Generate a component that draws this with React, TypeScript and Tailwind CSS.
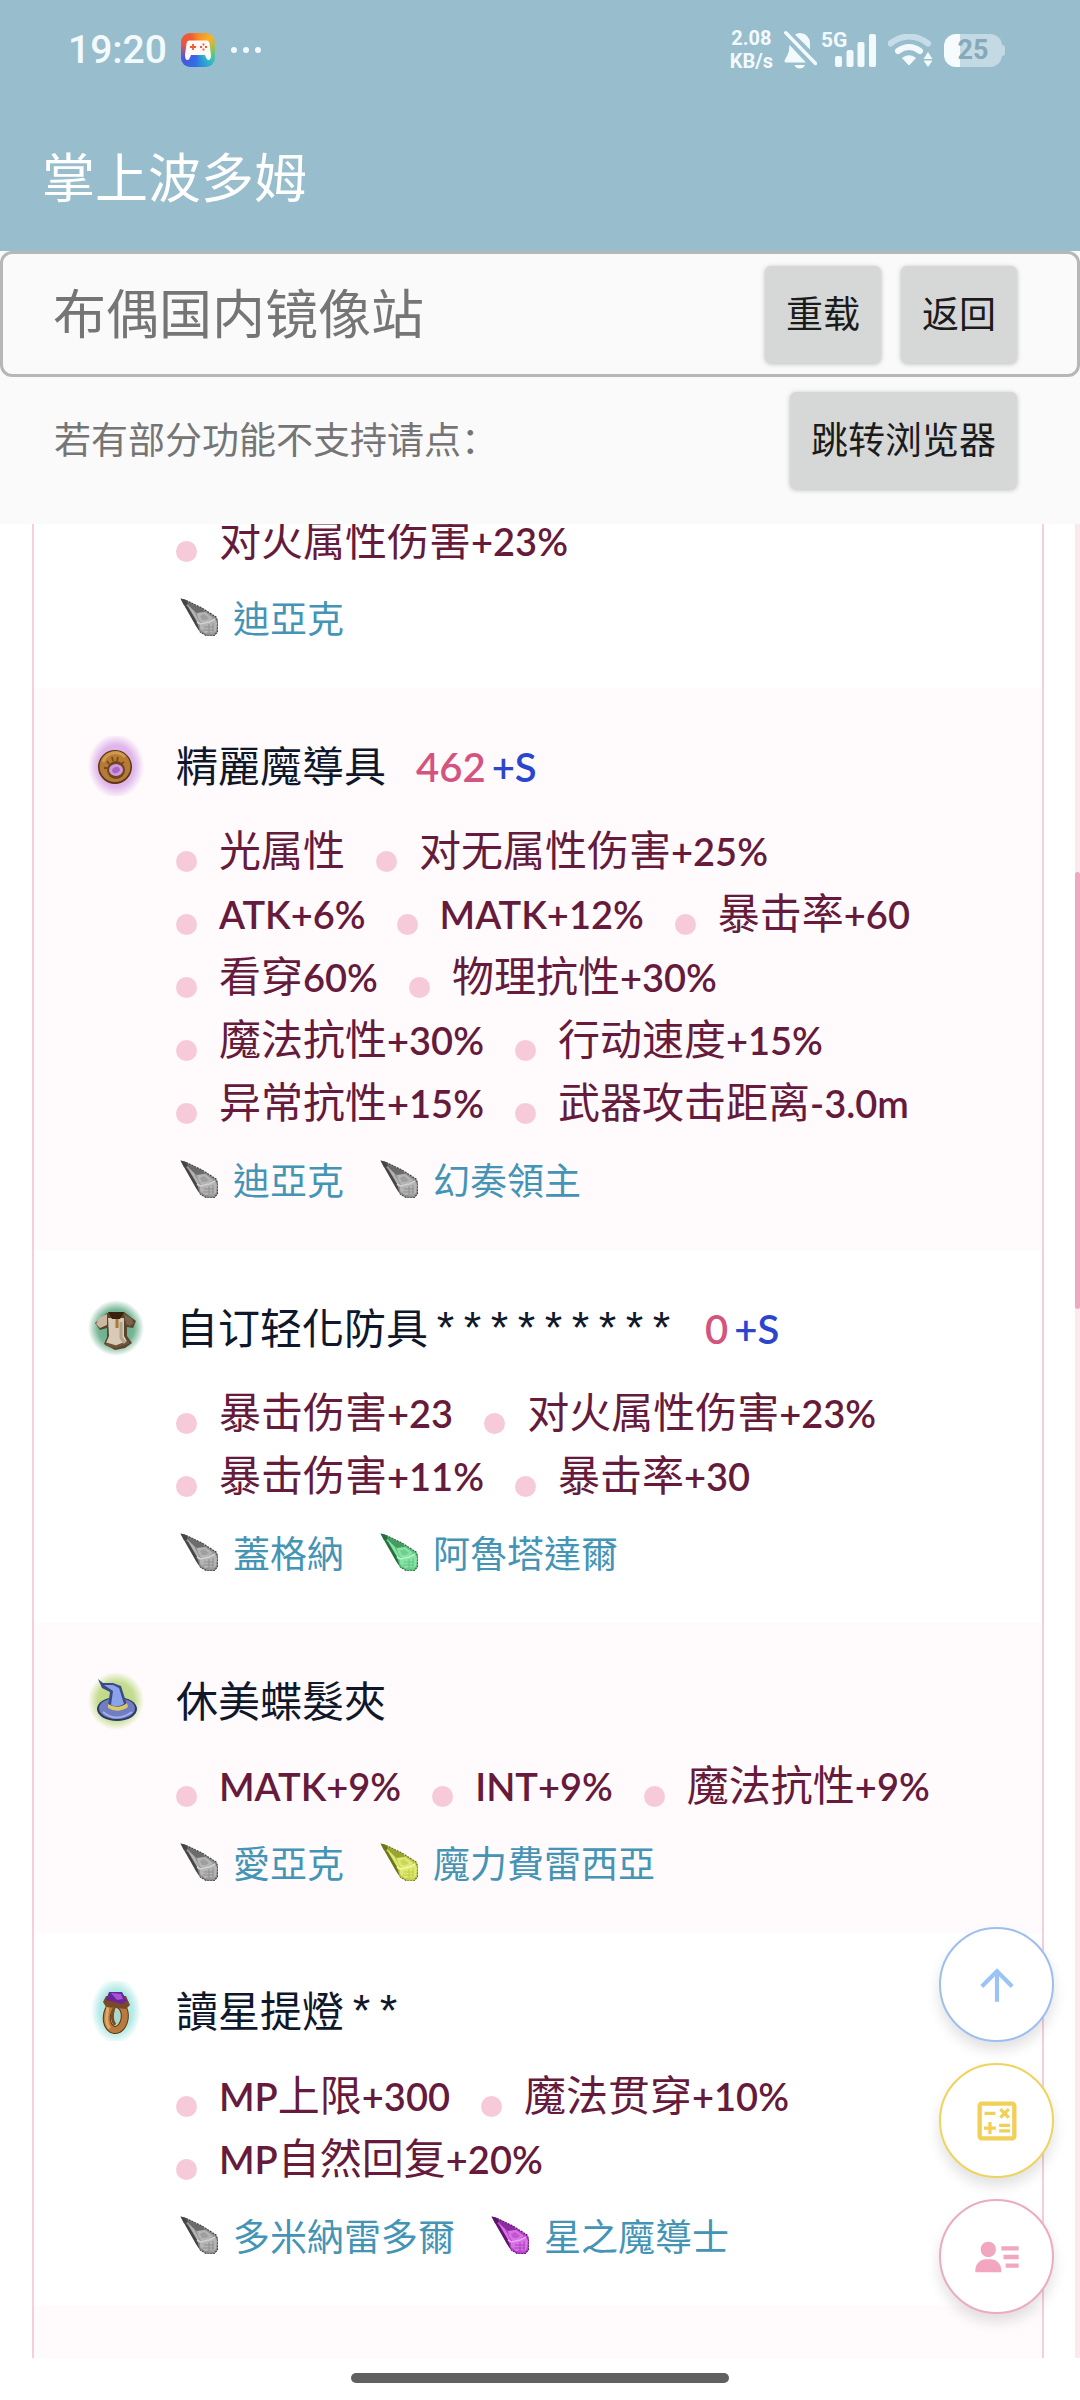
import { useId } from "react";
import type { ReactNode } from "react";
import { MdArrowUpward, MdOutlineCalculate } from "react-icons/md";
import { BiSolidUserDetail } from "react-icons/bi";

type StoneTone = "silver" | "green" | "yellow" | "violet";

interface Stone {
  name: string;
  tone: StoneTone;
}

interface Equipment {
  id: string;
  icon?: ReactNode;
  name?: string;
  stars?: string;
  value?: string;
  refine?: string;
  stats: string[];
  stones: Stone[];
}

const stonePalette: Record<StoneTone, { edge: string; dark: string; mid: string; light: string; shine: string }> = {
  silver: { edge: "#454545", dark: "#6b6b6b", mid: "#8f8f8f", light: "#b4b4b4", shine: "#d2d2d2" },
  green: { edge: "#2c6b42", dark: "#459a62", mid: "#62c284", light: "#86e3a3", shine: "#b2f5c4" },
  yellow: { edge: "#6c7420", dark: "#98a333", mid: "#c0cc4a", light: "#dfe971", shine: "#f2f8a6" },
  violet: { edge: "#5c1667", dark: "#8f2ba2", mid: "#b53fc6", light: "#d673e4", shine: "#eba6f3" },
};

function StoneIcon({ tone }: { tone: StoneTone }) {
  const c = stonePalette[tone];
  return (
    <svg viewBox="0 0 38 38" className="size-[38px] shrink-0" aria-hidden="true">
      <path d="M0.500 0.500 5 1.500 22 10 36 19 38 24 37.500 34 34 38 27 38 20 34 16 28 4 7Z" fill={c.mid} />
      <path d="M3 5 8 9 17 24 20 34 16 28Z" fill={c.edge} />
      <path d="M6 3.500 22 10.500 25 14 17 15 10 10Z" fill={c.dark} />
      <path d="M7 6 14 13 20 25 18 25Z" fill={c.light} />
      <path d="M0.500 0.500 5 1.500 8 5 6 8 3.500 6.500Z" fill={c.edge} />
      <path d="M17 15 25 14 33 20 28 24 21 25 18 20Z" fill={c.light} />
      <path d="M20 18 24 16 29 20 26 22 22 22Z" fill={c.mid} opacity="0.6" />
      <path d="M20 26 29 24 35 21 37 25 36 33 33 36 25 35 20 31Z" fill={c.light} />
      <path d="M17 24 20 26 29 24 35 21" fill="none" stroke={c.shine} strokeWidth="1.600" />
      <path d="M24 29h10M23 32h11M27 35h7M29 26v9M33 25v9" stroke={c.mid} strokeWidth="1" />
      <path d="M6 2.500 22 10 36 19 38 24 37.500 34 34 38 27 38 20 34" fill="none" stroke={c.edge} strokeWidth="1.200" strokeDasharray="2 1" />
    </svg>
  );
}

function Aura({ color, children, rx = 23, ry = 27 }: { color: string; children: ReactNode; rx?: number; ry?: number }) {
  const id = useId();
  return (
    <svg viewBox="0 0 56 60" className="h-[60px] w-14" aria-hidden="true">
      <defs>
        <radialGradient id={id}>
          <stop offset="0" stopColor={color} />
          <stop offset="0.650" stopColor={color} stopOpacity="0.850" />
          <stop offset="1" stopColor={color} stopOpacity="0" />
        </radialGradient>
        <filter id={`${id}-soft`}>
          <feGaussianBlur stdDeviation="0.600" />
        </filter>
      </defs>
      <ellipse cx="28" cy="30" rx={rx + 3} ry={ry + 3} fill={`url(#${id})`} />
      <g filter={`url(#${id}-soft)`}>{children}</g>
    </svg>
  );
}

function DeviceIcon() {
  return (
    <Aura color="#d9abe8" rx={25} ry={29}>
      <circle cx="27" cy="31" r="17" fill="#5b3512" />
      <circle cx="27" cy="30.500" r="15.500" fill="#b57a35" />
      <path d="M15 26a13 13 0 0 1 22-5" fill="none" stroke="#d09a50" strokeWidth="3" />
      <path d="M19 25l2 3M24 21l1 4M30 21l-1 4M36 26l-3 2M16 32h3" stroke="#7a4a1a" strokeWidth="1.800" />
      <circle cx="28" cy="34" r="9" fill="#70451c" />
      <ellipse cx="28" cy="34" rx="7" ry="6" fill="#cf9be0" />
      <ellipse cx="28" cy="34" rx="4" ry="3" fill="#a868c4" transform="rotate(-25 28 34)" />
    </Aura>
  );
}

function ArmorIcon() {
  return (
    <Aura color="#5fa984" ry={25} rx={25}>
      <path d="M19 15 36 14 48 23 45 30 39 29 39 38 44 45 37 50 27 52 16 46 19 39 19 30 12 32 7 25Z" fill="#59452e" />
      <path d="M19 16 11 20 8 26 12 30 19 27Z" fill="#c9b89f" />
      <path d="M36 16 43 20 46 25 42 28 38 26Z" fill="#7b6348" />
      <path d="M20 20 36 20 36 38 40 45 30 49 18 45 21 38Z" fill="#d8cab6" />
      <path d="M20 14 36 14 32 21 24 21Z" fill="#38240f" />
      <path d="M29 21v9" stroke="#a57a3a" strokeWidth="3" />
      <path d="M18 46 28 49 41 44" fill="none" stroke="#6e5438" strokeWidth="3" />
      <path d="M33 24v16l4 5" fill="none" stroke="#b5a388" strokeWidth="3" />
    </Aura>
  );
}

function HatIcon() {
  return (
    <Aura color="#b9d77d" rx={25} ry={26}>
      <ellipse cx="29" cy="38" rx="20" ry="12" fill="#2b3768" />
      <ellipse cx="29" cy="37.500" rx="18" ry="10.500" fill="#6f7dc0" />
      <path d="M10 8 15 12 25 12 33 15 39 34Q30 41 20 35L22 21 14 17Z" fill="#3c4a86" />
      <path d="M16 14 25 14 31 17 36 33Q29 37 23 34L25 20Z" fill="#8aa2ea" />
      <path d="M20 33Q30 39 39 32L40 36Q30 43 20 37Z" fill="#dbc965" />
      <path d="M15 41Q28 52 44 41" fill="none" stroke="#a3b0ea" strokeWidth="2" />
    </Aura>
  );
}

function RingIcon() {
  return (
    <Aura color="#a5e6e2" rx={22} ry={30}>
      <g transform="rotate(6 28 34)">
        <ellipse cx="28" cy="36" rx="9" ry="13" fill="#a9d8cd" stroke="#5c3515" strokeWidth="8" />
        <ellipse cx="28" cy="36" rx="9" ry="13" fill="none" stroke="#b97a3e" strokeWidth="6" />
        <path d="M19 27v12q1 6 4 9" stroke="#e2a766" strokeWidth="3" fill="none" />
        <path d="M25 28q-2 10 3 16" stroke="#7d4b20" strokeWidth="3" fill="none" />
      </g>
      <path d="M18 15 38 15 42 24 38 28 18 26 15 21Z" fill="#7b4a27" />
      <path d="M21 11 34 11 39 20 34 23 18 19Z" fill="#6b2598" />
      <path d="M23 12 33 13 35 18 29 19Z" fill="#a653d6" />
    </Aura>
  );
}

const equipment: Equipment[] = [
  {
    id: "previous",
    stats: ["对火属性伤害+23%"],
    stones: [{ name: "迪亞克", tone: "silver" }],
  },
  {
    id: "device",
    icon: <DeviceIcon />,
    name: "精麗魔導具",
    value: "462",
    refine: "+S",
    stats: [
      "光属性",
      "对无属性伤害+25%",
      "ATK+6%",
      "MATK+12%",
      "暴击率+60",
      "看穿60%",
      "物理抗性+30%",
      "魔法抗性+30%",
      "行动速度+15%",
      "异常抗性+15%",
      "武器攻击距离-3.0m",
    ],
    stones: [
      { name: "迪亞克", tone: "silver" },
      { name: "幻奏領主", tone: "silver" },
    ],
  },
  {
    id: "armor",
    icon: <ArmorIcon />,
    name: "自订轻化防具",
    stars: "*********",
    value: "0",
    refine: "+S",
    stats: ["暴击伤害+23", "对火属性伤害+23%", "暴击伤害+11%", "暴击率+30"],
    stones: [
      { name: "蓋格納", tone: "silver" },
      { name: "阿魯塔達爾", tone: "green" },
    ],
  },
  {
    id: "hat",
    icon: <HatIcon />,
    name: "休美蝶髮夾",
    stats: ["MATK+9%", "INT+9%", "魔法抗性+9%"],
    stones: [
      { name: "愛亞克", tone: "silver" },
      { name: "魔力費雷西亞", tone: "yellow" },
    ],
  },
  {
    id: "ring",
    icon: <RingIcon />,
    name: "讀星提燈",
    stars: "**",
    stats: ["MP上限+300", "魔法贯穿+10%", "MP自然回复+20%"],
    stones: [
      { name: "多米納雷多爾", tone: "silver" },
      { name: "星之魔導士", tone: "violet" },
    ],
  },
];

/* Latin runs are set in Lato, a little smaller than the Chinese around them. */
function StatText({ text }: { text: string }) {
  const parts = text.match(/[\x20-\x7e]+|[^\x20-\x7e]+/g) ?? [];
  return (
    <span className="whitespace-nowrap font-['Noto_Sans_CJK_SC',sans-serif] text-[42px] leading-[63px]">
      {parts.map((part, i) =>
        /^[\x20-\x7e]/.test(part) ? (
          <span key={i} className="font-['Lato',sans-serif] text-[38px] leading-none font-semibold">
            {part}
          </span>
        ) : (
          part
        ),
      )}
    </span>
  );
}

function EquipmentRow({ item }: { item: Equipment }) {
  return (
    <li className="flex gap-8 pr-[72px] pb-[47px] pl-[54px] even:bg-[#fffafb]">
      <div className={item.name ? "w-14 shrink-0 pt-12" : "w-14 shrink-0"}>{item.icon}</div>
      <div className={item.name ? "min-w-0 flex-1 pt-[46px]" : "min-w-0 flex-1"}>
        {item.name && (
          <div className="mb-5 flex h-[62px] items-baseline font-['Noto_Sans_CJK_TC',sans-serif] text-[42px] leading-[60px] text-slate-900">
            <h2>{item.name}</h2>
            {item.stars && (
              <span className="ml-1 font-['Liberation_Mono',monospace] text-[45px] leading-none">{item.stars}</span>
            )}
            {item.value && (
              <span className="ml-[30px] flex gap-1.5 font-['Lato',sans-serif] text-[40px] leading-none font-semibold">
                <span className="text-[#d2547f]">{item.value}</span>
                <span className="text-[#2b46cc]">{item.refine}</span>
              </span>
            )}
          </div>
        )}
        <ul className="flex flex-wrap gap-x-[31px] text-[#661a3c]">
          {item.stats.map((stat) => (
            <li key={stat} className="flex items-center gap-[22px]">
              <span className="mt-7 size-[21px] rounded-full bg-[#f6cad9]" />
              <StatText text={stat} />
            </li>
          ))}
        </ul>
        <ul className="mt-6 flex gap-9 pl-1">
          {item.stones.map((stone) => (
            <li key={stone.name}>
              <a
                href="#"
                className="flex items-center gap-[15px] font-['Noto_Sans_CJK_TC',sans-serif] text-[37px] leading-[48px] text-[#4494b6]"
              >
                <StoneIcon tone={stone.tone} />
                {stone.name}
              </a>
            </li>
          ))}
        </ul>
      </div>
    </li>
  );
}

function GameIcon() {
  return (
    <span className="flex size-[34px] items-center justify-center rounded-[9px] bg-[conic-gradient(from_0deg,#f58a2c,#f7b228_45deg,#7cc66a_95deg,#2fbfc4_130deg,#2f6fe8_190deg,#4d55d6_240deg,#e8554a_290deg,#ef5a33_330deg,#f58a2c)]">
      <svg viewBox="0 0 26 20" className="h-5 w-[26px]" aria-hidden="true">
        <path d="M4 0.500H22Q24 0.500 24.400 3L26 15Q26 20 23.500 20 22 20 21 17.500L20 15H6L5 17.500Q4 20 2.500 20 0 20 0 15L1.600 3Q2 0.500 4 0.500Z" fill="#fff8f6" />
        <path d="M8 4v6M5 7h6" stroke="#ee5a34" strokeWidth="1.800" />
        <path d="M18.500 3.500v2M18.500 8.500v2M15 7h2M20 7h2" stroke="#ee5a34" strokeWidth="1.800" />
      </svg>
    </span>
  );
}

function BellOffIcon() {
  return (
    <svg viewBox="0 0 33 38" className="h-[38px] w-[33px]" aria-hidden="true">
      <path d="M11 3.500Q13 2 16 2 26 3 26 13V18.500Z" fill="#f3fafe" />
      <path d="M5.500 14 22 31.500H2Q0 31.500 0.500 29.500L3.500 24Q5.500 20 5.500 14Z" fill="#f3fafe" />
      <path d="M10.500 34H21Q19.500 37.500 15.700 37.500T10.500 34Z" fill="#f3fafe" />
      <path d="M1.800 1.800 31.500 32.500" stroke="#f3fafe" strokeWidth="3.400" strokeLinecap="round" />
    </svg>
  );
}

function SignalIcon() {
  return (
    <svg viewBox="0 0 42 33" className="h-[33px] w-[42px]" aria-hidden="true" fill="#f3fafe">
      <rect x="0" y="22" width="7" height="11" rx="2" />
      <rect x="11.500" y="16" width="7" height="17" rx="2" />
      <rect x="22.500" y="8" width="7" height="25" rx="2" />
      <rect x="34" y="0" width="7" height="33" rx="2" />
    </svg>
  );
}

function WifiIcon() {
  return (
    <svg viewBox="0 0 45 33" className="h-[33px] w-[45px]" aria-hidden="true">
      <path d="M2.500 9.500Q21 -4.500 40 9.500" fill="none" stroke="#c6dde7" strokeWidth="6" strokeLinecap="round" />
      <path d="M10 17Q21 9 32 17" fill="none" stroke="#f3fafe" strokeWidth="6" strokeLinecap="round" />
      <path d="M14.500 24Q21 19.500 27.500 24L21 31Z" fill="#f3fafe" stroke="#f3fafe" strokeWidth="1" />
      <path d="M40 18l4.500 7h-9zM40 33l-4.500-6.500h9z" fill="#f3fafe" />
    </svg>
  );
}

function BatteryIcon() {
  return (
    <span className="flex items-center" aria-label="25%">
      <span className="flex h-[33px] w-[58px] items-center justify-center rounded-[12px] bg-[linear-gradient(to_right,#f6fbfd_16px,#c3dae5_16px)] text-[27px] leading-none font-bold text-[#85a9b8]">
        25
      </span>
      <span className="h-[11px] w-[3px] rounded-r-sm bg-[#c3dae5]" />
    </span>
  );
}

function ToolButton({ children }: { children: ReactNode }) {
  return (
    <button
      type="button"
      className="h-[97px] rounded-md bg-[#d6d7d7] px-[21px] pb-1 text-[37px] leading-none text-[#1b1b1b] shadow-[0_1px_5px_rgba(0,0,0,0.25)]"
    >
      {children}
    </button>
  );
}

function FloatingButton({ label, className, children }: { label: string; className: string; children: ReactNode }) {
  return (
    <button
      type="button"
      aria-label={label}
      className={`flex size-[115px] items-center justify-center rounded-full border-2 bg-white shadow-[0_8px_14px_rgba(0,0,0,0.12)] ${className}`}
    >
      {children}
    </button>
  );
}

export default function App() {
  return (
    <div className="flex h-screen flex-col overflow-hidden bg-white font-['Noto_Sans_CJK_SC',sans-serif]">
      <header className="bg-[#98becd] text-white">
        <div className="flex h-[100px] items-center justify-between pr-[75px] pl-[68px] font-['Roboto',sans-serif] text-[#f3fafe]">
          <div className="flex items-center">
            <span className="text-[39px] leading-none font-medium">19:20</span>
            <span className="ml-3.5">
              <GameIcon />
            </span>
            <span className="ml-4 flex gap-1.5">
              <span className="size-1.5 rounded-full bg-[#f3fafe]" />
              <span className="size-1.5 rounded-full bg-[#f3fafe]" />
              <span className="size-1.5 rounded-full bg-[#f3fafe]" />
            </span>
          </div>
          <div className="flex items-center gap-[11px]">
            <span className="text-center text-[20px] leading-[23px] font-bold">
              2.08
              <br />
              KB/s
            </span>
            <span className="flex items-center gap-1">
              <BellOffIcon />
              <span className="relative pl-[14px]">
                <span className="absolute -top-1 left-0 text-[21px] leading-none font-bold">5G</span>
                <SignalIcon />
              </span>
            </span>
            <WifiIcon />
            <BatteryIcon />
          </div>
        </div>
        <h1 className="flex h-[151px] items-center pl-[42px] text-[53px] leading-none">掌上波多姆</h1>
      </header>

      <section className="bg-[#fafafa] pb-[35px] text-[#757575]">
        <div className="flex h-[126px] items-center justify-between rounded-xl border-[3px] border-[#b7b7b7] pr-[60px] pl-[50px]">
          <p className="pb-1.5 text-[53px] leading-none">布偶国内镜像站</p>
          <div className="flex gap-5">
            <ToolButton>重载</ToolButton>
            <ToolButton>返回</ToolButton>
          </div>
        </div>
        <div className="mt-[15px] flex items-center justify-between pr-[63px] pl-[54px]">
          <p className="pb-1 text-[37px] leading-none">若有部分功能不支持请点：</p>
          <ToolButton>跳转浏览器</ToolButton>
        </div>
      </section>

      <main className="flex min-h-0 flex-1 overflow-hidden">
        <ul className="-mt-[18px] ml-8 flex flex-1 flex-col border-x-2 border-[#f4d0da]">
          {equipment.map((item) => (
            <EquipmentRow key={item.id} item={item} />
          ))}
          <li className="flex-1 even:bg-[#fffafb]" />
        </ul>
        <div className="ml-[31px] w-[5px] bg-[#fbe9ee] pt-[348px]">
          <div className="h-[437px] rounded-full bg-[#f0a7c0]" />
        </div>
      </main>

      <footer className="flex h-[42px] justify-center pt-[15px]">
        <span className="h-2.5 w-[35%] rounded-full bg-[#606060]" />
      </footer>

      <nav className="fixed right-[26px] bottom-[86px] flex flex-col gap-[21px]">
        <FloatingButton label="回到顶部" className="border-[#9dbff0] text-[#9bc3f5]">
          <MdArrowUpward size={50} />
        </FloatingButton>
        <FloatingButton label="计算" className="border-[#efd35f] text-[#f2d057]">
          <MdOutlineCalculate size={52} />
        </FloatingButton>
        <FloatingButton label="角色资料" className="border-[#ecabc0] text-[#f2a6bf]">
          <BiSolidUserDetail size={52} />
        </FloatingButton>
      </nav>
    </div>
  );
}
